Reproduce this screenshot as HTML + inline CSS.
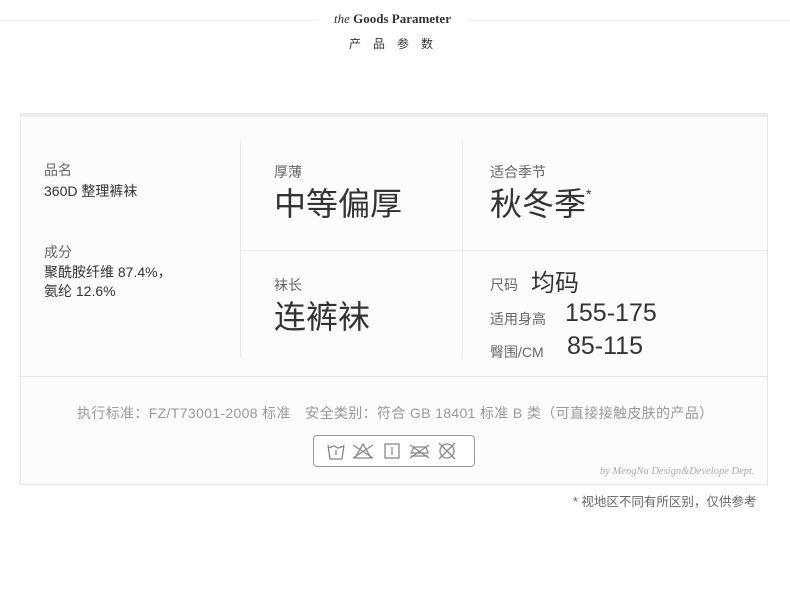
<!DOCTYPE html>
<html><head><meta charset="utf-8"><style>
body{margin:0;width:790px;height:596px;background:#fff;position:relative;overflow:hidden;font-family:"Liberation Sans","Noto Sans CJK SC",sans-serif;}
.a{position:absolute;white-space:nowrap;}
.lbl{font-size:14px;color:#666;}
.val{font-size:14px;color:#333;}
.big{font-size:32px;color:#333;}
</style></head><body>
<div class="a" style="left:0;top:20px;width:318px;height:1px;background:#eee"></div>
<div class="a" style="left:468px;top:20px;width:322px;height:1px;background:#eee"></div>
<div class="a" style="left:334px;top:11px;font-family:'Liberation Serif',serif;font-size:13px;font-weight:bold;color:#333"><i style="font-weight:normal">the</i> Goods Parameter</div>
<div class="a" style="left:349px;top:35px;font-size:12px;color:#333;letter-spacing:12px">产品参数</div>

<div class="a" style="left:20px;top:113px;width:746px;height:367px;border:1px solid #e6e6e6;border-top:4px solid #ececec;background:#fcfcfc"></div>
<div class="a" style="left:240px;top:140px;width:1px;height:218px;background:#e8e8e8"></div>
<div class="a" style="left:462px;top:140px;width:1px;height:218px;background:#e8e8e8"></div>
<div class="a" style="left:241px;top:250px;width:526px;height:1px;background:#ececec"></div>
<div class="a" style="left:21px;top:376px;width:746px;height:1px;background:#e6e6e6"></div>

<div class="a lbl" style="left:44px;top:160px">品名</div>
<div class="a val" style="left:44px;top:181px">360D 整理裤袜</div>
<div class="a lbl" style="left:44px;top:242px">成分</div>
<div class="a val" style="left:44px;top:263px;line-height:19px">聚酰胺纤维 87.4%，<br>氨纶 12.6%</div>

<div class="a lbl" style="left:274px;top:162px">厚薄</div>
<div class="a big" style="left:274px;top:179px">中等偏厚</div>
<div class="a lbl" style="left:490px;top:162px">适合季节</div>
<div class="a big" style="left:490px;top:179px">秋冬季<sup style="font-size:14px;position:relative;top:-4px">*</sup></div>

<div class="a lbl" style="left:274px;top:275px">袜长</div>
<div class="a big" style="left:274px;top:292px">连裤袜</div>
<div class="a lbl" style="left:490px;top:275px">尺码</div>
<div class="a" style="left:531px;top:263px;font-size:24px;color:#333">均码</div>
<div class="a lbl" style="left:490px;top:309px">适用身高</div>
<div class="a" style="left:565px;top:299px;font-size:25px;color:#333">155-175</div>
<div class="a lbl" style="left:490px;top:342px">臀围/CM</div>
<div class="a" style="left:567px;top:332px;font-size:25px;color:#333">85-115</div>

<div class="a" style="left:77px;top:403px;font-size:14px;color:#999;letter-spacing:0.35px">执行标准：FZ/T73001-2008 标准　安全类别：符合 GB 18401 标准 B 类（可直接接触皮肤的产品）</div>

<div class="a" style="left:313px;top:435px;width:160px;height:30px;border:1px solid #999;border-radius:4px;background:#fff"></div>
<svg class="a" style="left:325px;top:440px" width="140" height="22" viewBox="0 0 140 22" fill="none" stroke="#888" stroke-width="1.3">
<path d="M3 5 L5 19 H17 L19 5 M3 7 C6 9 8 4 11 7 C14 10 16 5 19 7"/><path d="M11 10 V15"/>
<path d="M30 18 L38 4 L46 18 Z M28 5 L48 18 M48 5 L28 18"/>
<rect x="60" y="4" width="14" height="14"/><path d="M67 7 V15"/>
<path d="M86 13 L89 7 H101 L103 13 Z M86 16 H103 M85 5 L104 18 M104 5 L85 18"/>
<circle cx="122" cy="11" r="7"/><path d="M114 3 L130 19 M130 3 L114 19"/>
</svg>

<div class="a" style="left:600px;top:466px;font-family:'Liberation Serif',serif;font-style:italic;font-size:10.5px;color:#aaa">by MengNa Design&amp;Develope Dept.</div>
<div class="a" style="left:573px;top:491px;font-size:12.5px;color:#666">* 视地区不同有所区别，仅供参考</div>
</body></html>
